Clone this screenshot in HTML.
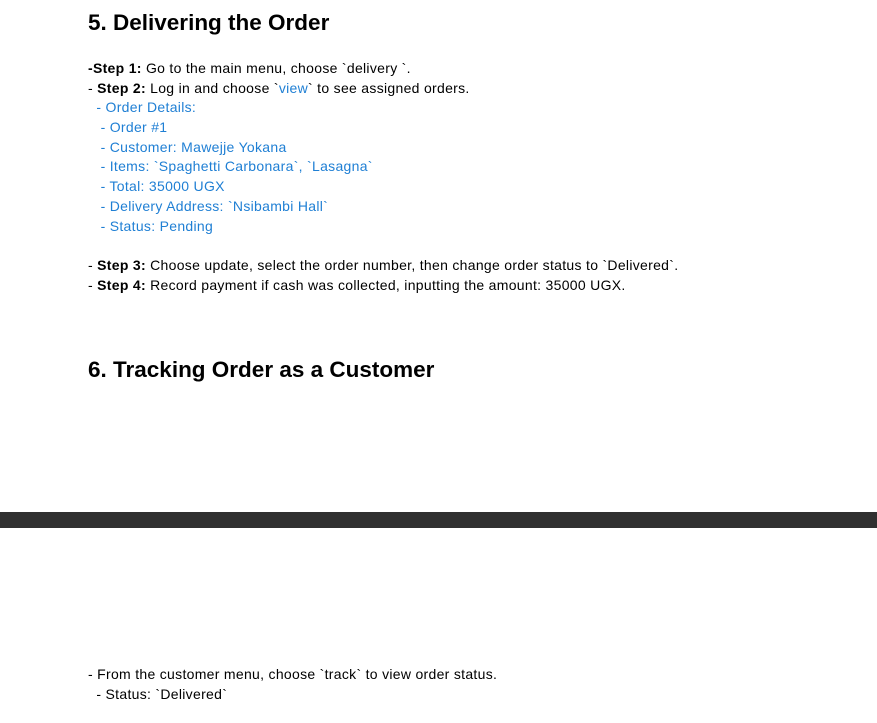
<!DOCTYPE html>
<html><head><meta charset="utf-8"><style>
body{margin:0;width:877px;height:723px;background:#fff;position:relative;overflow:hidden;font-family:"Liberation Sans",Arial,sans-serif;color:#000}
.l{position:absolute;left:88px;font-size:14px;letter-spacing:0.3px;white-space:pre;line-height:16px}
.b{color:#1f7fd4}
h{position:absolute;left:88px;font-weight:bold;font-size:22.5px;white-space:pre}
.bar{position:absolute;left:0;top:512px;width:877px;height:16px;background:#303030}
</style></head><body>
<h style="top:10px">5. Delivering the Order</h>
<div class="l" style="top:60px"><b>-Step 1:</b> Go to the main menu, choose `delivery `.</div>
<div class="l" style="top:80px">- <b>Step 2:</b> Log in and choose `<span class="b">view</span>` to see assigned orders.</div>
<div class="l b" style="top:99px">  - Order Details:</div>
<div class="l b" style="top:119px">   - Order #1</div>
<div class="l b" style="top:139px">   - Customer: Mawejje Yokana</div>
<div class="l b" style="top:158px">   - Items: `Spaghetti Carbonara`, `Lasagna`</div>
<div class="l b" style="top:178px">   - Total: 35000 UGX</div>
<div class="l b" style="top:198px">   - Delivery Address: `Nsibambi Hall`</div>
<div class="l b" style="top:218px">   - Status: Pending</div>
<div class="l" style="top:257px">- <b>Step 3:</b> Choose update, select the order number, then change order status to `Delivered`.</div>
<div class="l" style="top:277px">- <b>Step 4:</b> Record payment if cash was collected, inputting the amount: 35000 UGX.</div>
<h style="top:357px">6. Tracking Order as a Customer</h>
<div class="bar"></div>
<div class="l" style="top:666px">- From the customer menu, choose `track` to view order status.</div>
<div class="l" style="top:686px">  - Status: `Delivered`</div>
</body></html>
